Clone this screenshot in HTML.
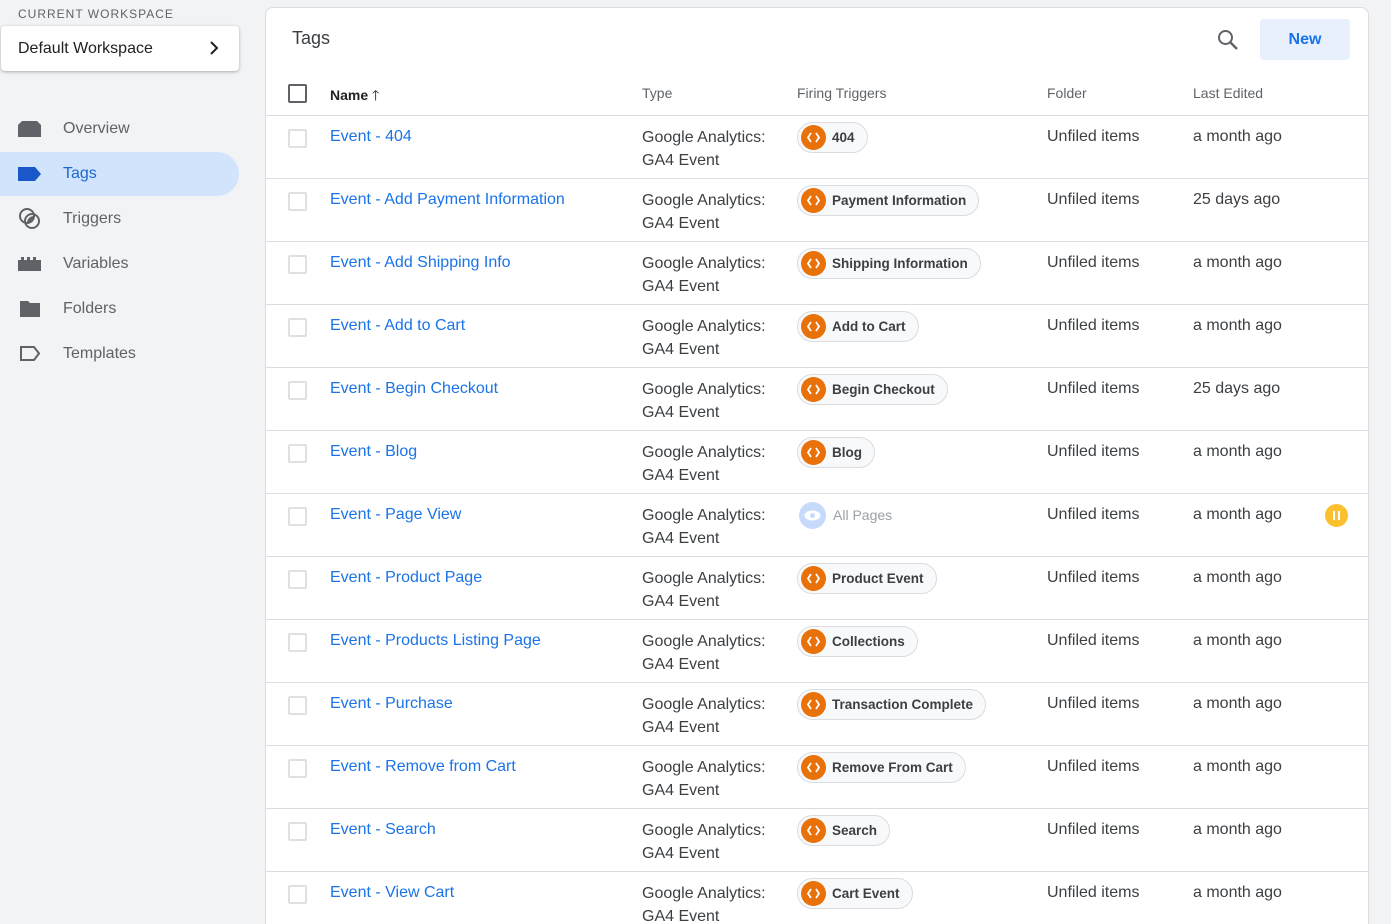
<!DOCTYPE html>
<html><head><meta charset="utf-8"><style>
*{box-sizing:border-box;margin:0;padding:0}
body{width:1391px;height:924px;overflow:hidden;background:#f1f3f4;font-family:"Liberation Sans",Arial,sans-serif;color:#3c4043;position:relative}
.abs{position:absolute}
.ws-label{left:18px;top:7px;font-size:12px;letter-spacing:1px;color:#5f6368}
.ws{left:1px;top:26px;width:238px;height:45px;background:#fff;border-radius:4px;box-shadow:0 1px 3px rgba(0,0,0,.3);font-size:16px;color:#202124;padding:14px 17px}
.nav{left:0;width:239px;height:44px;font-size:16px;color:#5f6368;padding:14px 0 0 63px}
.nav.act{background:#d2e3fc;color:#1967d2;border-radius:0 22px 22px 0;padding-top:13px}
.card{left:265px;top:7px;width:1104px;height:917px;background:#fff;border:1px solid #dadce0;border-bottom:none;border-radius:8px 8px 0 0;overflow:hidden}
.row{position:absolute;left:0;width:1104px;height:63px;border-top:1px solid #dadce0;font-size:16px}
.cb{position:absolute;left:22px;top:13px;width:19px;height:19px;border:2px solid #e0e0e0;border-radius:2px}
.nm{position:absolute;left:64px;top:12px;color:#1a73e8}
.ty{position:absolute;left:376px;top:10px;line-height:23px;color:#3c4043}
.fo{position:absolute;left:781px;top:12px}
.le{position:absolute;left:927px;top:12px}
.chip{position:absolute;left:531px;top:6px;height:31px;border:1px solid #dadce0;border-radius:16px;background:#f8f9fa;padding:0 12px 0 34px;font-size:13.5px;font-weight:bold;line-height:29px;color:#3c4043}
.chip i{position:absolute;left:3px;top:2px;width:25px;height:25px;border-radius:50%;background:#e8710a}
.chip i svg{position:absolute;left:6px;top:7px}
.hd{position:absolute;top:77px;font-size:14px;color:#5f6368}
</style></head><body>
<div class="abs ws-label">CURRENT WORKSPACE</div>
<div class="abs ws">Default Workspace<svg class="abs" style="left:208px;top:15px" width="10" height="14" viewBox="0 0 10 14"><path d="M2 1l6 6-6 6" stroke="#202124" stroke-width="2" fill="none"/></svg></div>

<div class="abs nav" style="top:106px">Overview</div>
<svg class="abs" style="left:18px;top:121px" width="23" height="16"><path d="M4 0h15l4 4v12H0V4z" fill="#5f6368"/></svg>
<div class="abs nav act" style="top:152px">Tags</div>
<svg class="abs" style="left:18px;top:167px" width="23" height="14"><path d="M0 0h17l6 7-6 7H0z" fill="#1a57c8"/></svg>
<div class="abs nav" style="top:196px">Triggers</div>
<svg class="abs" style="left:18px;top:207px" width="24" height="24"><circle cx="9" cy="9" r="7" fill="none" stroke="#5f6368" stroke-width="2"/><circle cx="14" cy="14" r="7" fill="none" stroke="#5f6368" stroke-width="2"/><path d="M9 16a7 7 0 0 1 7-7 7 7 0 0 1-7 7z" fill="#5f6368"/></svg>
<div class="abs nav" style="top:241px">Variables</div>
<svg class="abs" style="left:18px;top:257px" width="23" height="14"><path d="M0 3h3V0h3v3h3V0h3v3h3V0h3v3h5v11H0z" fill="#5f6368"/></svg>
<div class="abs nav" style="top:286px">Folders</div>
<svg class="abs" style="left:20px;top:301px" width="20" height="16"><path d="M0 0h8l2 2h10v14H0z" fill="#5f6368"/></svg>
<div class="abs nav" style="top:331px">Templates</div>
<svg class="abs" style="left:20px;top:346px" width="20" height="15"><path d="M1 1h13l5 6.5-5 6.5H1z" fill="none" stroke="#5f6368" stroke-width="2"/></svg>

<div class="abs card">
<div class="abs" style="left:26px;top:20px;font-size:18px;color:#3c4043">Tags</div>
<svg class="abs" style="left:951px;top:21px" width="22" height="22" viewBox="0 0 22 22"><circle cx="8.5" cy="8.5" r="6.5" fill="none" stroke="#5f6368" stroke-width="2"/><path d="M13 13l7 7" stroke="#5f6368" stroke-width="2.4"/></svg>
<div class="abs" style="left:994px;top:11px;width:90px;height:41px;background:#e8f0fe;border-radius:4px;color:#1a73e8;font-size:16px;font-weight:bold;text-align:center;line-height:41px">New</div>
<div class="abs" style="left:22px;top:76px;width:19px;height:19px;border:2px solid #5f6368;border-radius:2px"></div>
<div class="hd" style="left:64px;color:#202124;font-weight:bold">Name <span style="font-weight:normal">🡑</span></div>
<div class="hd" style="left:376px">Type</div>
<div class="hd" style="left:531px">Firing Triggers</div>
<div class="hd" style="left:781px">Folder</div>
<div class="hd" style="left:927px">Last Edited</div>
<div id="rows"></div>
</div>
<script>
var d=[["Event - 404","404","a month ago"],["Event - Add Payment Information","Payment Information","25 days ago"],["Event - Add Shipping Info","Shipping Information","a month ago"],["Event - Add to Cart","Add to Cart","a month ago"],["Event - Begin Checkout","Begin Checkout","25 days ago"],["Event - Blog","Blog","a month ago"],["Event - Page View","","a month ago"],["Event - Product Page","Product Event","a month ago"],["Event - Products Listing Page","Collections","a month ago"],["Event - Purchase","Transaction Complete","a month ago"],["Event - Remove from Cart","Remove From Cart","a month ago"],["Event - Search","Search","a month ago"],["Event - View Cart","Cart Event","a month ago"]];
var h="";d.forEach(function(r,i){var t=107+i*63;
var chip=r[1]?'<div class="chip"><i><svg width="13" height="11" viewBox="0 0 13 11"><path d="M4 1L1 5.5 4 10M9 1l3 4.5L9 10" stroke="#fff" stroke-width="1.8" fill="none"/></svg></i>'+r[1]+'</div>':'<div class="abs" style="left:533px;top:8px;width:27px;height:27px;border-radius:50%;background:#c6dafc"><svg style="position:absolute;left:5px;top:8px" width="17" height="11"><ellipse cx="8.5" cy="5.5" rx="8" ry="5" fill="#fff"/><circle cx="8.5" cy="5.5" r="2.5" fill="#c6dafc"/></svg></div><div class="abs" style="left:567px;top:13px;font-size:14px;color:#9aa0a6">All Pages</div><div class="abs" style="left:1059px;top:10px;width:23px;height:23px;border-radius:50%;background:#fbc02d"><div class="abs" style="left:8px;top:7px;width:2px;height:9px;background:#fff"></div><div class="abs" style="left:13px;top:7px;width:2px;height:9px;background:#fff"></div></div>';
h+='<div class="row" style="top:'+t+'px"><div class="cb"></div><div class="nm">'+r[0]+'</div><div class="ty">Google Analytics:<br>GA4 Event</div>'+chip+'<div class="fo">Unfiled items</div><div class="le">'+r[2]+'</div></div>';});
document.getElementById("rows").innerHTML=h;
</script>
</body></html>
